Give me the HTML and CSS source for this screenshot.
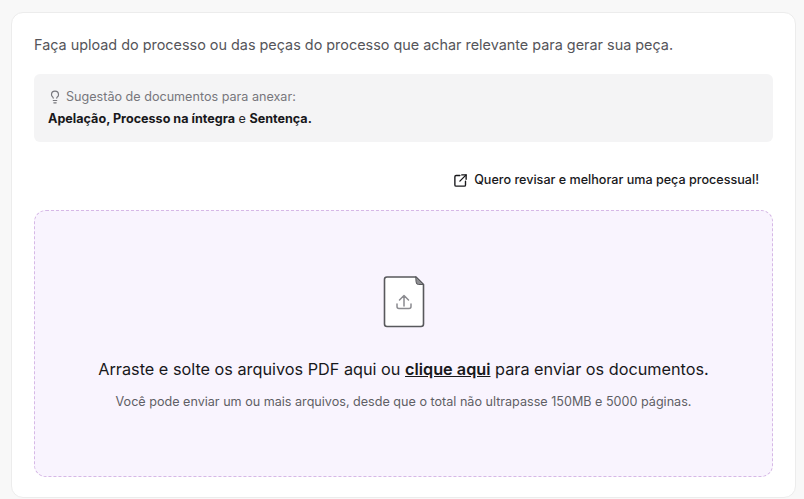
FILE: index.html
```
<!DOCTYPE html>
<html lang="pt-BR">
<head>
<meta charset="utf-8">
<title>Upload</title>
<link rel="stylesheet" href="styles.css">
</head>
<body>
<main class="card">
  <p class="intro">Faça upload do processo ou das peças do processo que achar relevante para gerar sua peça.</p>
  <section class="hint">
    <div class="hint-title">
      <svg class="bulb" width="14" height="14" viewBox="0 0 24 24" fill="none" stroke="currentColor" stroke-width="2" stroke-linecap="round" stroke-linejoin="round"><path d="M15 14c.2-1 .7-1.7 1.5-2.5 1-.9 1.5-2.2 1.5-3.5A6 6 0 0 0 6 8c0 1 .2 2.2 1.5 3.5.7.7 1.3 1.5 1.5 2.5"/><path d="M9 18h6"/><path d="M10 22h4"/></svg>
      <span>Sugestão de documentos para anexar:</span>
    </div>
    <div class="hint-docs"><strong>Apelação, Processo na íntegra</strong> e <strong>Sentença.</strong></div>
  </section>
  <div class="link-row">
    <a class="link" href="#">
      <svg width="15" height="15" viewBox="0 0 24 24" fill="none" stroke="currentColor" stroke-width="2.2" stroke-linecap="round" stroke-linejoin="round"><path d="M11 4H5a2 2 0 0 0-2 2v13a2 2 0 0 0 2 2h13a2 2 0 0 0 2-2v-6"/><path d="M14 3h7v7"/><path d="M21 3 11 13"/></svg>
      <span>Quero revisar e melhorar uma peça processual!</span>
    </a>
  </div>
  <section class="drop">
    <svg class="file" width="42" height="54" viewBox="0 0 42 54" fill="none" stroke-linecap="round" stroke-linejoin="round">
      <path d="M4 2H33L40.500 9.500V49a2.500 2.500 0 0 1-2.500 2.500H4A2.500 2.500 0 0 1 1.500 49V4.500A2.500 2.500 0 0 1 4 2Z" fill="#fff" stroke="#58585c" stroke-width="1.600"/>
      <path d="M33 2 40.500 9.500H35.500a2.500 2.500 0 0 1-2.500-2.500Z" fill="#8e8e92" stroke="#58585c" stroke-width="1"/>
      <path d="M21 31V20.500M16.500 25 21 20.500 25.500 25M14 29v2.500a2 2 0 0 0 2 2h10a2 2 0 0 0 2-2V29" stroke="#8b8b90" stroke-width="1.500"/>
    </svg>
    <p class="drop-title">Arraste e solte os arquivos PDF aqui ou <a href="#">clique aqui</a> para enviar os documentos.</p>
    <p class="drop-note">Você pode enviar um ou mais arquivos, desde que o total não ultrapasse 150MB e 5000 páginas.</p>
  </section>
</main>
</body>
</html>
```
FILE: styles.css
```
* { box-sizing: border-box; }
html, body { height: 100%; }
body {
  margin: 0;
  background: #f8f8f8;
  font-family: Inter, "Liberation Sans", sans-serif;
  overflow: hidden;
}
.card {
  margin: 12px 8px 0 11px;
  height: 486px;
  padding: 22px 22px 0 22px;
  background: #fff;
  border: 1px solid #ececec;
  border-radius: 12px;
}
.intro {
  margin: 0;
  font-size: 14.400px;
  line-height: 20px;
  color: #55555a;
}
.hint {
  margin-top: 19px;
  height: 68px;
  padding: 13px 14px 0;
  background: #f4f4f5;
  border-radius: 6px;
}
.hint-title {
  display: flex;
  align-items: center;
  gap: 4px;
  font-size: 12.600px;
  line-height: 20px;
  color: #77777c;
}
.bulb { flex: none; }
.hint-docs {
  margin-top: 2px;
  font-size: 12.600px;
  line-height: 20px;
  color: #27272a;
}
.hint-docs strong { font-weight: 700; color: #18181b; }
.link-row {
  display: flex;
  justify-content: flex-end;
  margin-top: 28px;
  padding-right: 14px;
  height: 20px;
}
.link {
  display: flex;
  align-items: center;
  gap: 6px;
  font-size: 12.600px;
  font-weight: 500;
  line-height: 20px;
  color: #18181b;
  text-decoration: none;
}
.drop {
  display: flex;
  flex-direction: column;
  align-items: center;
  margin-top: 20px;
  height: 267px;
  padding-top: 64px;
  background: #f9f4fe;
  border: 1px dashed #d6b8e6;
  border-radius: 12px;
}
.file { flex: none; }
.drop-title {
  margin: 28px 0 0;
  font-size: 16.250px;
  line-height: 24px;
  color: #18181b;
  white-space: nowrap;
}
.drop-title a { color: #18181b; font-weight: 600; text-decoration: underline; }
.drop-note {
  margin: 11px 0 0;
  font-size: 12.600px;
  line-height: 20px;
  color: #5f5f65;
  white-space: nowrap;
}
```
